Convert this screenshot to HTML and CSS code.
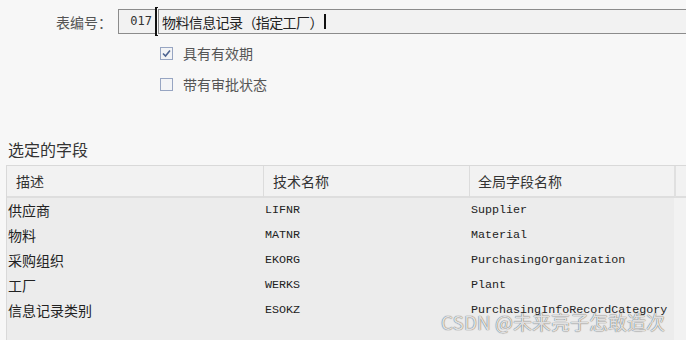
FILE: index.html
```html
<!DOCTYPE html>
<html lang="zh">
<head>
<meta charset="utf-8">
<link rel="stylesheet" href="styles.css">
</head>
<body>
<div class="page">
  <div class="id-row">
    <span class="label">表编号：</span>
    <div class="num">017</div>
    <div class="title-field">
      <span class="bracket"></span>
      <span class="title-text">物料信息记录（指定工厂）</span><span class="caret"></span>
    </div>
  </div>
  <div class="check-row first">
    <span class="cb">
      <svg width="11" height="11" viewBox="0 0 11 11"><path d="M2 5.5 L4.5 8 L9 2.5" fill="none" stroke="#4d6390" stroke-width="1.6"/></svg>
    </span>
    <span class="check-text">具有有效期</span>
  </div>
  <div class="check-row second">
    <span class="cb"></span>
    <span class="check-text">带有审批状态</span>
  </div>

  <div class="section-title">选定的字段</div>

  <div class="table">
    <div class="head c1">描述</div>
    <div class="head c2">技术名称</div>
    <div class="head c3">全局字段名称</div>
    <div class="head c4"></div>

    <div class="cell c1 zh">供应商</div><div class="cell c2 mono">LIFNR</div><div class="cell c3 mono">Supplier</div><div class="cell c4"></div>
    <div class="cell c1 zh">物料</div><div class="cell c2 mono">MATNR</div><div class="cell c3 mono">Material</div><div class="cell c4"></div>
    <div class="cell c1 zh">采购组织</div><div class="cell c2 mono">EKORG</div><div class="cell c3 mono">PurchasingOrganization</div><div class="cell c4"></div>
    <div class="cell c1 zh">工厂</div><div class="cell c2 mono">WERKS</div><div class="cell c3 mono">Plant</div><div class="cell c4"></div>
    <div class="cell c1 zh">信息记录类别</div><div class="cell c2 mono">ESOKZ</div><div class="cell c3 mono">PurchasingInfoRecordCategory</div><div class="cell c4"></div>
    <div class="cell c1 fill"></div><div class="cell c2 fill"></div><div class="cell c3 fill"></div><div class="cell c4 fill"></div>
  </div>

  <div class="watermark">CSDN @未来亮子怎敢造次</div>
</div>
</body>
</html>
```

FILE: styles.css
```css
* { box-sizing: border-box; }
html, body {
  margin: 0;
  padding: 0;
  background: #f7f7f7;
  overflow: hidden;
}
body {
  font-family: "Noto Sans CJK SC", "Noto Sans", sans-serif;
  font-size: 14px;
  color: #333;
}
.page {
  position: relative;
  width: 686px;
  height: 340px;
  overflow: hidden;
}
.id-row {
  display: flex;
  align-items: center;
  margin-top: 9px;
  height: 25px;
  position: relative;
}
.label {
  width: 112px;
  text-align: right;
  margin-right: 6px;
  color: #555;
  line-height: 20px;
}
.num {
  width: 38px;
  height: 25px;
  border: 1px solid #8c8c8c;
  background: #f2f2f2;
  text-align: right;
  padding-right: 3px;
  font-family: "DejaVu Sans Mono", monospace;
  font-size: 12px;
  line-height: 23px;
  color: #333;
}
.title-field {
  flex: 1;
  height: 25px;
  margin-left: 2px;
  border: 1px solid #8c8c8c;
  border-right: none;
  background: #f2f2f2;
  padding-left: 3px;
  display: flex;
  align-items: center;
  position: relative;
  color: #222;
}
.title-text {
  line-height: 20px;
  letter-spacing: -0.6px;
}
.bracket {
  position: absolute;
  left: -4px;
  top: -3px;
  width: 3px;
  height: 29px;
  border-left: 2px solid #111;
  border-top: 1px solid #111;
  border-bottom: 1px solid #111;
}
.caret {
  display: inline-block;
  width: 2px;
  height: 15px;
  background: #111;
  margin-left: 1px;
}
.check-row {
  display: flex;
  align-items: center;
  height: 20px;
  padding-left: 160px;
}
.check-row.first { margin-top: 9px; }
.check-row.second { margin-top: 11px; }
.cb {
  width: 13px;
  height: 13px;
  border: 1px solid #97a5c2;
  background: #f3f4f6;
  display: flex;
  align-items: center;
  justify-content: center;
}
.check-text {
  margin-left: 10px;
  color: #555;
  line-height: 20px;
}
.section-title {
  margin-top: 45px;
  margin-left: 8px;
  font-size: 16px;
  line-height: 20px;
  color: #333;
}
.table {
  margin-top: 6px;
  margin-left: 6px;
  display: grid;
  grid-template-columns: 257px 206px 206px 1fr;
  grid-template-rows: 32px repeat(5, 25px) 40px;
  border-top: 1px solid #d9d9d9;
  border-left: 1px solid #d9d9d9;
}
.head {
  background: #f2f2f2;
  border-bottom: 2px solid #dedede;
  border-right: 1px solid #dcdcdc;
  line-height: 30px;
  color: #333;
  padding-left: 9px;
}
.head.c3 { border-right: 2px solid #e0e0e0; padding-left: 8px; }
.head.c4 { border-right: none; }
.cell {
  background: #ececec;
  line-height: 25px;
  color: #222;
  padding-left: 1px;
  white-space: nowrap;
}
.cell.c1 { padding-left: 1px; }
.cell.c3 { border-right: 2px solid #f2f2f2; }
.cell.c4 { background: #f2f2f2; }
.zh { font-size: 14px; }
.mono {
  font-family: "Liberation Mono", monospace;
  font-size: 11.7px;
}
.watermark {
  position: absolute;
  left: 441px;
  top: 309px;
  font-family: "Noto Sans CJK SC", sans-serif;
  font-size: 19px;
  line-height: 26px;
  color: rgba(250, 250, 250, 0.85);
  text-shadow: 0 0 1px rgba(0, 0, 0, 0.55), 0 0 1px rgba(0, 0, 0, 0.35);
  white-space: nowrap;
}
```
